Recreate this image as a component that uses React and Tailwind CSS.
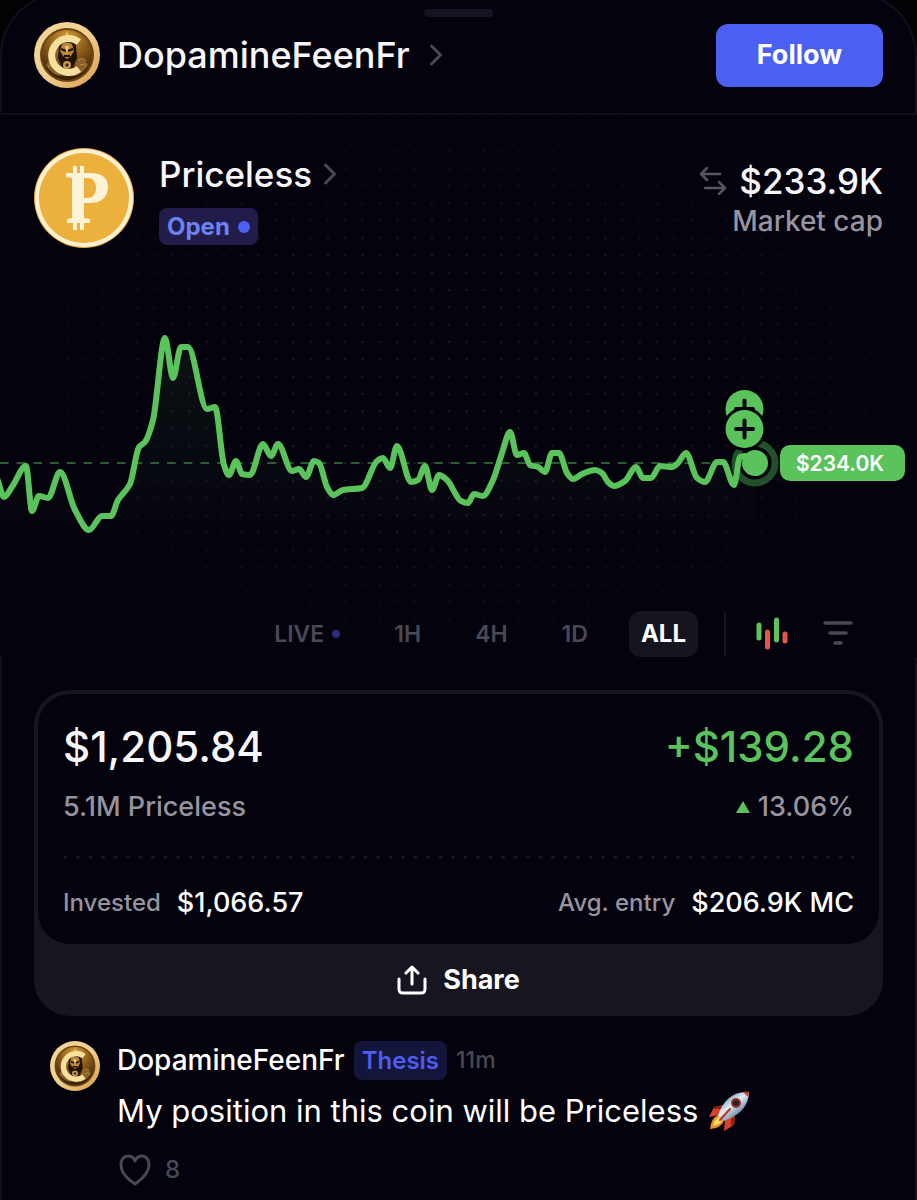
import React from 'react';
import { ChevronRight } from 'lucide-react';

const RANGES = [
  { id: 'live', name: 'LIVE' },
  { id: '1h', name: '1H' },
  { id: '4h', name: '4H' },
  { id: '1d', name: '1D' },
  { id: 'all', name: 'ALL' },
];

// Chart samples in the 917 x 330 chart space
const POINTS = [
  [-4, 218], [4, 237], [12, 227], [26, 206], [32, 251], [39, 236], [48, 238], [60, 212], [75, 250], [89, 270],
  [102, 256], [111, 256], [118, 240], [130, 224], [139, 187], [145, 182], [153, 160], [165, 78], [173, 118],
  [181, 87], [188, 87], [207, 149], [215, 147], [224, 205], [229, 215], [236, 201], [242, 214], [250, 215], [263, 184],
  [271, 196], [278, 184], [292, 211], [299, 209], [306, 217], [314, 201], [319, 203], [327, 227], [333, 235], [343, 230],
  [362, 228], [377, 201], [383, 198], [390, 208], [397, 186], [411, 222], [418, 220], [425, 206], [432, 230],
  [439, 215], [447, 220], [461, 241], [468, 243], [474, 234], [483, 236], [493, 220], [502, 193], [510, 172],
  [517, 195], [524, 193], [530, 205], [538, 207], [545, 212], [552, 193], [559, 193], [567, 213], [573, 219],
  [582, 214], [595, 210], [602, 213], [608, 222], [614, 226], [625, 221], [636, 207], [643, 218], [651, 218],
  [660, 206], [672, 207], [678, 203], [686, 193], [697, 218], [705, 222], [717, 202], [723, 202], [734, 225],
  [740, 197], [745, 196], [755, 203],
];

// Monotone cubic through the samples
function smoothPath(pts) {
  const slope = (a, b) => (b[1] - a[1]) / (b[0] - a[0]);
  const tangents = pts.map((p, i) => {
    if (i === 0 || i === pts.length - 1) return 0;
    const s0 = slope(pts[i - 1], p);
    const s1 = slope(p, pts[i + 1]);
    if (s0 * s1 <= 0) return 0;
    return (2 * s0 * s1) / (s0 + s1);
  });
  let d = `M${pts[0][0]} ${pts[0][1]}`;
  for (let i = 1; i < pts.length; i++) {
    const [x0, y0] = pts[i - 1];
    const [x1, y1] = pts[i];
    const h = (x1 - x0) / 3;
    d += `C${x0 + h} ${y0 + h * tangents[i - 1]} ${x1 - h} ${y1 - h * tangents[i]} ${x1} ${y1}`;
  }
  return d;
}

const LINE = smoothPath(POINTS);

function UserAvatar({ id, className }) {
  return (
    <svg viewBox="0 0 66 66" className={className} role="img" aria-label="DopamineFeenFr">
      <defs>
        <linearGradient id={`${id}-rim`} x1="0" y1="0" x2="1" y2="1">
          <stop offset="0" stopColor="#f3d79a" />
          <stop offset="0.5" stopColor="#f2cf92" />
          <stop offset="1" stopColor="#d69a45" />
        </linearGradient>
        <radialGradient id={`${id}-face`} cx="0.5" cy="0.15" r="0.9">
          <stop offset="0" stopColor="#d49a35" />
          <stop offset="0.45" stopColor="#8a5c19" />
          <stop offset="1" stopColor="#2a1706" />
        </radialGradient>
      </defs>
      <circle cx="33" cy="33" r="33" fill={`url(#${id}-rim)`} />
      <circle cx="33" cy="33" r="27" fill="#6b4512" />
      <circle cx="33" cy="33" r="25" fill={`url(#${id}-face)`} />
      <path d="M12 43q5-9 12-3l3 14q-9-1-15-11zM54 43q-6-10-12-3l-3 14q9-1 15-11z" fill="#8a6228" />
      <path d="M14 45q5-5 9 0M44 38q5-3 8 1M46 43q4-2 6 1" fill="none" stroke="#b98f48" strokeWidth="1" />
      <path d="M33 9l3 7h-6z" fill="#edb94f" />
      <path d="M25 23q8-8 17 0l1 13-5 11h-9l-5-11z" fill="#1f1206" />
      <path d="M28 22q5-3 10 0l2 7-3 5-4 3-4-3-3-5z" fill="#b98538" />
      <path d="M27 27l5 2M39 27l-5 2M30 34h6" stroke="#241304" strokeWidth="2" />
      <path d="M31 24l2 8 2-8z" fill="#eec77e" />
      <circle cx="33" cy="43" r="4" fill="#c99846" />
      <path d="M31 43l2-2 2 2-2 2z" fill="#352009" />
      <path d="M45 20A17 17 0 1 0 45 47" fill="none" stroke="#f7df9f" strokeWidth="7" />
    </svg>
  );
}

function CoinLogo() {
  return (
    <svg viewBox="0 0 100 100" className="size-25 shrink-0" role="img" aria-label="Priceless coin">
      <circle cx="50" cy="50" r="50" fill="#e9a93a" />
      <circle cx="50" cy="50" r="49" fill="#fdf1d3" />
      <circle cx="50" cy="50" r="45" fill="#ecb03c" />
      <g fill="#fdf4d8">
        <path d="M39 18h4v8h-4zM46 18h4v8h-4zM39 73h4v9h-4zM46 73h4v9h-4z" />
        <path
          fillRule="evenodd"
          d="M32 25h25c11 0 17 5 17 14 0 10-7 16-17 16h-7v15l6 1v4H33v-4l5-1V30l-6-1zM50 30v20h4c5 0 8-4 8-10s-3-10-8-10z"
        />
      </g>
    </svg>
  );
}

function Rocket() {
  return (
    <svg viewBox="0 0 42 40" className="h-10 w-[42px] shrink-0" role="img" aria-label="rocket">
      <defs>
        <linearGradient id="rocket-body" x1="0.2" y1="0.2" x2="0.7" y2="0.8">
          <stop offset="0" stopColor="#6a9bc0" />
          <stop offset="0.45" stopColor="#e3edf2" />
          <stop offset="1" stopColor="#5b7fa0" />
        </linearGradient>
      </defs>
      <path d="M15 14L6 16 1 26l10-2z" fill="#d8432a" />
      <path d="M27 25l-1 9-10 6 1-11z" fill="#d8432a" />
      <path d="M15 14L6 16l-1 2 8 0zM27 25l-1 9-3 2 0-8z" fill="#8e2018" />
      <path d="M10 24q-7 3-8 14 11-1 14-8z" fill="#f08a24" />
      <path d="M11 26q-5 3-6 9 6-1 9-5z" fill="#ffe163" />
      <path d="M41 1q-12-1-20 6Q13 14 10 25l6 5q11-4 17-10 8-8 8-19z" fill="url(#rocket-body)" />
      <path d="M41 1q-3-1-6 0l5 5q1-3 1-5z" fill="#c9402d" />
      <circle cx="28" cy="12" r="5" fill="#a32b1f" />
      <circle cx="28" cy="12" r="3" fill="#20222e" />
      <path d="M22 18l-10 11" stroke="#b93524" strokeWidth="2" strokeLinecap="round" />
    </svg>
  );
}

function DotGrid() {
  return (
    <svg className="absolute inset-0 size-full" aria-hidden="true">
      <defs>
        <pattern id="dots" width="17.33" height="17.33" x="8" y="11" patternUnits="userSpaceOnUse">
          <circle cx="8" cy="8" r="1.2" fill="#1c1c27" />
        </pattern>
        <radialGradient id="dots-fade" cx="0.5" cy="0.5" r="0.58">
          <stop offset="0.4" stopColor="#fff" />
          <stop offset="1" stopColor="#000" />
        </radialGradient>
        <mask id="dots-mask">
          <rect width="100%" height="100%" fill="url(#dots-fade)" />
        </mask>
      </defs>
      <rect width="100%" height="100%" fill="url(#dots)" mask="url(#dots-mask)" />
    </svg>
  );
}

function PriceChart() {
  return (
    <svg viewBox="0 0 917 330" className="relative block w-full" role="img" aria-label="Market cap chart">
      <defs>
        <linearGradient id="area" x1="0" y1="60" x2="0" y2="300" gradientUnits="userSpaceOnUse">
          <stop offset="0" stopColor="#5ac35b" stopOpacity="0.09" />
          <stop offset="1" stopColor="#5ac35b" stopOpacity="0" />
        </linearGradient>
      </defs>
      <path d={`${LINE}V300H-4Z`} fill="url(#area)" />
      <path d="M0 203H755" stroke="#2b5c33" strokeWidth="2" strokeDasharray="8.7 8" />
      <circle cx="755" cy="203" r="20" fill="#04020d" stroke="#21502b" strokeWidth="7" />
      <path d={LINE} fill="none" stroke="#5ac35b" strokeWidth="6" strokeLinejoin="round" strokeLinecap="round" />
      <circle cx="755" cy="203" r="13" fill="#5ac35b" />
      {/* Buy markers */}
      {[149, 169].map((y) => (
        <g key={y}>
          <circle cx="744.5" cy={y} r="22" fill="#04020d" />
          <circle cx="744.5" cy={y} r="19" fill="#5ac35b" />
          <path d={`M736 ${y}h17M744.5 ${y - 8.5}v17`} stroke="#04020d" strokeWidth="4" strokeLinecap="round" />
        </g>
      ))}
      <rect x="780" y="185" width="125" height="36" rx="10" fill="#5ac35b" />
      <text x="840" y="211" textAnchor="middle" fill="#fff" className="font-[Inter,sans-serif] text-[21px] font-semibold">
        $234.0K
      </text>
    </svg>
  );
}

function RangeBar() {
  return (
    <div className="relative flex items-center justify-end pr-16 text-[23px] font-semibold text-[#494953]">
      {RANGES.map((range) => (
        <button
          key={range.id}
          className={
            range.id === 'all'
              ? 'ml-[14px] h-[46px] rounded-xl bg-[#151520] px-3 text-2xl font-bold text-white'
              : 'flex h-[46px] items-center gap-2 px-[27px]'
          }
        >
          {range.name}
          {range.id === 'live' && <span className="size-2 rounded-full bg-[#272f80]" />}
        </button>
      ))}
      <span className="mr-[29px] ml-[26px] h-[46px] w-0.5 bg-[#151520]" />
      <button aria-label="Candles">
        <svg viewBox="0 0 34 34" className="size-[34px]" strokeWidth="5" strokeLinecap="round">
          <path d="M4 8v13M21.500 3v20" stroke="#5ac35b" />
          <path d="M12.500 15v15M30 17v7" stroke="#e5544f" />
        </svg>
      </button>
      <button aria-label="Filter" className="ml-[34px]">
        <svg viewBox="0 0 30 34" className="h-[34px] w-[30px]" strokeWidth="3.5" strokeLinecap="round" stroke="#494953">
          <path d="M2 6h26M7 16h16M12 26h6" />
        </svg>
      </button>
    </div>
  );
}

function PositionCard() {
  return (
    <section className="mx-8 mt-[33px] rounded-[36px] bg-[#171620] p-1 pb-0">
      <div className="h-[250px] rounded-[32px] bg-[#04020d] px-[25px] pt-[25px]">
        <div className="flex items-center justify-between text-[42px] leading-[56px] font-medium text-[#f7f7fa]">
          <span>$1,205.84</span>
          <span className="text-[#5ac35b]">+$139.28</span>
        </div>
        <div className="mt-3 flex items-center justify-between text-[27px] leading-10 font-medium text-[#96949f]">
          <span>5.1M Priceless</span>
          <span className="flex items-center gap-2">
            <svg viewBox="0 0 14 12" className="h-3 w-3.5" fill="#5ac35b" aria-hidden="true">
              <path d="M7 0l7 12H0z" />
            </svg>
            13.06%
          </span>
        </div>
        <svg className="mt-7 block h-1 w-full" aria-hidden="true">
          <line x1="2" y1="2" x2="100%" y2="2" stroke="#1b1a24" strokeWidth="3" strokeDasharray="1 11.5" strokeLinecap="round" />
        </svg>
        <div className="mt-6 flex items-center justify-between text-2xl leading-10 font-medium text-[#96949f]">
          <span className="flex items-center gap-4">
            Invested <span className="text-[27px] text-white">$1,066.57</span>
          </span>
          <span className="flex items-center gap-4">
            Avg. entry <span className="text-[27px] text-white">$206.9K MC</span>
          </span>
        </div>
      </div>
      <button className="flex h-18 w-full items-center justify-center gap-4 text-[27px] font-bold text-white">
        <svg viewBox="0 0 30 30" className="size-[30px]" fill="none" stroke="currentColor" strokeWidth="3" strokeLinecap="round" strokeLinejoin="round">
          <path d="M2 14v10q0 4 4 4h18q4 0 4-4V14M15 19V3M9 8l6-6 6 6" />
        </svg>
        Share
      </button>
    </section>
  );
}

function Comment() {
  return (
    <article className="flex items-start gap-[17px] pt-6 pr-8 pl-12 text-white">
      <UserAvatar id="comment" className="mt-px size-[50px] shrink-0" />
      <div>
        <div className="flex items-center gap-[9px]">
          <span className="text-[28px] leading-10 font-medium">DopamineFeenFr</span>
          <span className="rounded-lg bg-[#14153a] px-2 text-2xl leading-[39px] font-semibold text-[#4c5df0]">Thesis</span>
          <span className="text-[23px] font-medium text-[#494953]">11m</span>
        </div>
        <p className="mt-2 flex items-center gap-[10px] text-[31px] leading-[46px]">
          My position in this coin will be Priceless <Rocket />
        </p>
        <button className="mt-5 flex items-center gap-[14px] text-2xl leading-8 font-medium text-[#494953]">
          <svg viewBox="0 0 34 32" className="h-8 w-[34px]" fill="none" stroke="currentColor" strokeWidth="3" strokeLinejoin="round" aria-label="Like">
            <path d="M18 30Q4 21 4 11C4 5 7 2 11 2c4 0 6 2 7 5 1-3 3-5 7-5 4 0 7 3 7 9 0 10-14 19-14 19z" />
          </svg>
          8
        </button>
      </div>
    </article>
  );
}

export default function App() {
  return (
    <div className="flex min-h-screen flex-col overflow-hidden bg-[#030305] font-[Inter,sans-serif] antialiased">
      <main className="-mt-2 flex-1 rounded-t-[64px] border-2 border-b-0 border-[#12111b] bg-[#04020d]">
        <header>
          <div className="mx-auto mt-[15px] h-2 w-[69px] rounded-full bg-[#151420]" />
          <div className="flex items-center justify-between px-8 pt-[5px] pb-[25px]">
            <a href="#profile" className="flex items-center text-[#f7f7fa]">
              <UserAvatar id="header" className="size-[66px]" />
              <span className="ml-[17px] text-[36px] leading-[44px] font-medium">DopamineFeenFr</span>
              <ChevronRight className="ml-2 size-9 text-[#494953]" strokeWidth={2} />
            </a>
            <button className="h-[63px] w-[167px] rounded-xl bg-[#4b60f2] text-[27px] font-bold text-white">
              Follow
            </button>
          </div>
        </header>

        <section className="relative -mx-0.5 border-t-2 border-[#12111b] bg-[#04020d]">
          <DotGrid />
          <div className="relative flex h-[145px] justify-between px-[34px] pt-[33px]">
            <div className="flex gap-[25px]">
              <CoinLogo />
              <div className="flex flex-col items-start">
                <a href="#coin" className="mt-1 flex items-center text-[35px] leading-[44px] font-medium text-[#f7f7fa]">
                  Priceless
                  <ChevronRight className="size-9 text-[#494953]" strokeWidth={2} />
                </a>
                <span className="mt-3 flex h-[37px] items-center gap-2 rounded-lg bg-[#211c4a] px-2 text-2xl font-bold text-[#6d82f3]">
                  Open <span className="size-3 rounded-full bg-[#4b60f2]" />
                </span>
              </div>
            </div>
            <div className="flex flex-col items-end pt-[11px]">
              <div className="flex items-center gap-3 text-[35px] leading-[44px] font-medium text-[#f7f7fa]">
                <svg viewBox="0 0 28 28" className="size-7" fill="none" stroke="#55555d" strokeWidth="2.500" strokeLinecap="round" strokeLinejoin="round" aria-hidden="true">
                  <path d="M21 7H2M8 1L2 7l6 6M6 21h20M20 15l6 6-6 6" />
                </svg>
                $233.9K
              </div>
              <span className="text-[28px] leading-9 font-medium text-[#96949f]">Market cap</span>
            </div>
          </div>
          <PriceChart />
          <div className="pt-[21px]">
            <RangeBar />
          </div>
        </section>

        <PositionCard />
        <Comment />
      </main>
    </div>
  );
}
